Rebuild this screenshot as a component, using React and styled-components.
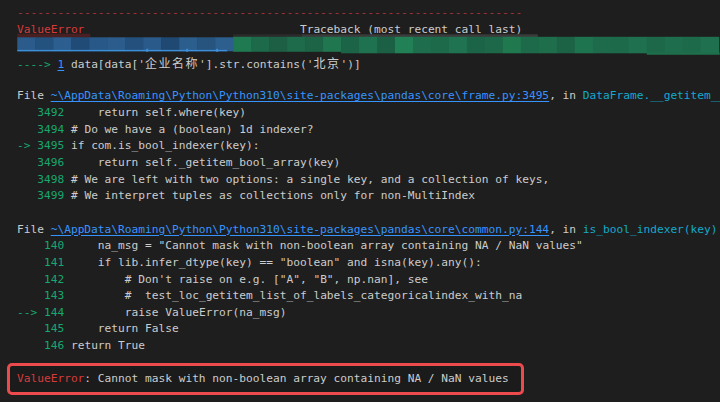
import styled, { createGlobalStyle } from "styled-components";

const GlobalStyle = createGlobalStyle`
  html, body {
    margin: 0;
    padding: 0;
    background: #1e1e1e;
  }
`;

const LH = "16.67px";

const blockOne = [
  { num: "3492", code: "    return self.where(key)" },
  { num: "3494", code: "# Do we have a (boolean) 1d indexer?" },
  { num: "3495", code: "if com.is_bool_indexer(key):", arrow: true },
  { num: "3496", code: "    return self._getitem_bool_array(key)" },
  { num: "3498", code: "# We are left with two options: a single key, and a collection of keys," },
  { num: "3499", code: "# We interpret tuples as collections only for non-MultiIndex" },
];

const blockTwo = [
  { num: "140", code: '    na_msg = "Cannot mask with non-boolean array containing NA / NaN values"' },
  { num: "141", code: '    if lib.infer_dtype(key) == "boolean" and isna(key).any():' },
  { num: "142", code: '        # Don\'t raise on e.g. ["A", "B", np.nan], see' },
  { num: "143", code: "        #  test_loc_getitem_list_of_labels_categoricalindex_with_na" },
  { num: "144", code: "        raise ValueError(na_msg)", arrow: true },
  { num: "145", code: "    return False" },
  { num: "146", code: "return True" },
];

const blueBlocks = ["#2a5b8b", "#24527f", "#2c5e8f", "#214b77", "#285887", "#2b5c8c", "#23507d", "#2a5a89", "#1f4872", "#2b5d8d", "#26547f", "#2c5e8e"];
const greenBlocks = ["#1f7a52", "#1d6a4a", "#1c5f45", "#1e6b4b", "#1d6346", "#20774f", "#1c6447", "#1f724f", "#1b6044", "#218055", "#1e6d4c", "#1d6a4a", "#1f7350", "#1c6447", "#1d6848", "#20784f", "#1d6a4a", "#1e6e4c", "#1c6245", "#1f7450", "#1e6b4b", "#1d6a4a", "#1f704e", "#1d6848", "#1e6d4c", "#1d6a4a", "#1f704e"];

export default function App() {
  return (
    <>
      <GlobalStyle />
      <Output>
        <Line>
          <Dashes>{"-".repeat(75)}</Dashes>
        </Line>
        <Line>
          <Red>ValueError</Red>
          {" ".repeat(32)}Traceback (most recent call last)
        </Line>
        <Line>
          <Redaction />
        </Line>
        <Line>
          <Green>----&gt;</Green> <Link>1</Link> data[data['<Wide>企业名称</Wide>'].str.contains('<Wide>北京</Wide>')]
        </Line>
        <Line />
        <Line>
          File <Link>~\AppData\Roaming\Python\Python310\site-packages\pandas\core\frame.py:3495</Link>, in{" "}
          <Cyan>DataFrame.__getitem__(self, key)</Cyan>
        </Line>
        {blockOne.map((row) => (
          <Line key={row.num}>
            <Green>{row.arrow ? "-> " : "   "}{row.num}</Green> {row.code}
          </Line>
        ))}
        <Line />
        <Line>
          File <Link>~\AppData\Roaming\Python\Python310\site-packages\pandas\core\common.py:144</Link>, in{" "}
          <Cyan>is_bool_indexer(key)</Cyan>
        </Line>
        {blockTwo.map((row) => (
          <Line key={row.num}>
            <Green>{row.arrow ? "--> " : "    "}{row.num}</Green> {row.code}
          </Line>
        ))}
        <ErrorBox>
          <Line>
            <Red>ValueError</Red>: Cannot mask with non-boolean array containing NA / NaN values
          </Line>
        </ErrorBox>
      </Output>
    </>
  );
}

// blurred-out line from the screenshot, drawn in page coordinates
function Redaction() {
  return (
    <MosaicSvg viewBox="17 36.7 703 16.67" width="703" height="16.67">
      <rect x="17" y="32.4" width="73" height="4" fill="#4a1f22" />
      <rect x="233" y="33" width="70" height="3" fill="#2b2b2b" />
      <rect x="302" y="33" width="236" height="3" fill="#3b3b3b" />
      {blueBlocks.map((c, i) => (
        <rect key={"b" + i} x={17 + i * 18} y="36" width="18.5" height="14" fill={c} />
      ))}
      <rect x="17" y="48.6" width="210" height="1.4" fill="#3d8fd8" />
      <rect x="146" y="47.5" width="2" height="3" fill="#3d8fd8" />
      <rect x="186" y="47.5" width="2" height="3" fill="#3d8fd8" />
      <rect x="216" y="47.5" width="2" height="3" fill="#3d8fd8" />
      {greenBlocks.map((c, i) => (
        <rect key={"g" + i} x={233 + i * 18} y="35.5" width="18.5" height={i >= 6 ? 16.5 : 15} fill={c} />
      ))}
      <rect x="647" y="51" width="73" height="2.5" fill="#1e6e4c" />
    </MosaicSvg>
  );
}

const Output = styled.div`
  padding: 5px 0 0 17px;
  font-family: "DejaVu Sans Mono", "Noto Sans CJK SC", monospace;
  font-size: 11.2px;
  color: #cccccc;
  width: 703px;
  height: 397px;
  overflow: hidden;
`;

const Line = styled.div`
  height: ${LH};
  line-height: ${LH};
  white-space: pre;
`;

const Dashes = styled.span`
  color: #a8343a;
`;

const Red = styled.span`
  color: #d63b3b;
`;

const Green = styled.span`
  color: #16a870;
`;

const Link = styled.span`
  color: #3794ff;
  text-decoration: underline;
  text-underline-offset: 2px;
`;

const Cyan = styled.span`
  color: #14a9cf;
`;

const Wide = styled.span`
  font-family: "Noto Sans CJK SC", sans-serif;
  font-size: 12px;
  letter-spacing: 1.5px;
`;

const MosaicSvg = styled.svg`
  display: block;
  overflow: visible;
`;

const ErrorBox = styled.div`
  width: fit-content;
  margin: 8px 0 0 -10px;
  padding: 5px 12px 5px 7px;
  border: 3px solid #ec4a4c;
  border-radius: 5px;
  background: #1b1b1b;
`;
